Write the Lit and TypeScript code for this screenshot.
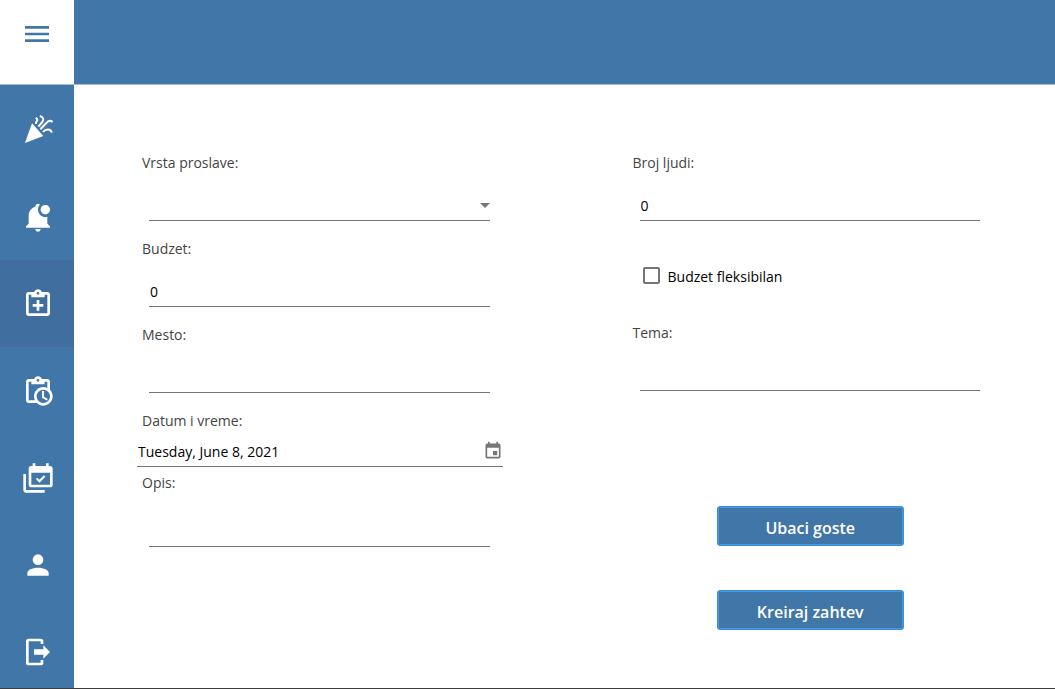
import { LitElement, html, css, svg } from "lit";
import { customElement, state } from "lit/decorators.js";
import { classMap } from "lit/directives/class-map.js";

const partyIcon = svg`
  <path d="M7.5 6.9L2.2 21.7L16 16.5z"/>
  <g fill="none" stroke="currentColor" stroke-width="1.5">
    <path d="M10.3 2.9C11.6 3.7 11.8 4.5 11.1 5.4C10.5 6.1 10.3 6.7 10.6 7.5"/>
    <path d="M13.4 1.5C16 2.2 16.7 4.2 15.2 6L12.3 9.4"/>
    <path d="M13.8 11.4L18.6 6.4C19.8 5 21.5 4.8 23 6"/>
    <path d="M15.7 13.5C17.6 11.1 21.6 10.6 22.3 14"/>
  </g>`;

const paths = {
  menu: "M3 6H21V8H3V6M3 11H21V13H3V11M3 16H21V18H3V16Z",
  bell: "M21 6.5C21 8.43 19.43 10 17.5 10S14 8.43 14 6.5 15.57 3 17.5 3 21 4.57 21 6.5M19 11.79C18.5 11.92 18 12 17.5 12C14.47 12 12 9.53 12 6.5C12 5.03 12.58 3.7 13.5 2.71C13.15 2.28 12.61 2 12 2C10.9 2 10 2.9 10 4V4.29C7.03 5.17 5 7.9 5 11V17L3 19V20H21V19L19 17V11.79M12 23C13.11 23 14 22.11 14 21H10C10 22.11 10.9 23 12 23Z",
  add: "M19 3H14.82C14.4 1.84 13.3 1 12 1S9.6 1.84 9.18 3H5C3.9 3 3 3.9 3 5V19C3 20.1 3.9 21 5 21H19C20.1 21 21 20.1 21 19V5C21 3.9 20.1 3 19 3M12 3C12.55 3 13 3.45 13 4S12.55 5 12 5 11 4.55 11 4 11.45 3 12 3M7 7H17V5H19V19H5V5H7V7M13 9H11V12H8V14H11V17H13V14H16V12H13V9Z",
  clock: "M21 11.11V5C21 3.9 20.11 3 19 3H14.82C14.4 1.84 13.3 1 12 1S9.6 1.84 9.18 3H5C3.9 3 3 3.9 3 5V19C3 20.11 3.9 21 5 21H11.11C12.37 22.24 14.09 23 16 23C19.87 23 23 19.87 23 16C23 14.09 22.24 12.37 21 11.11M12 3C12.55 3 13 3.45 13 4S12.55 5 12 5 11 4.55 11 4 11.45 3 12 3M5 19V5H7V7H17V5H19V9.68C18.09 9.25 17.08 9 16 9C12.13 9 9 12.13 9 16C9 17.08 9.25 18.09 9.68 19H5M16 21C13.24 21 11 18.76 11 16S13.24 11 16 11 21 13.24 21 16 18.76 21 16 21M16.5 16.25L19.36 17.94L18.61 19.16L15 17V12H16.5V16.25Z",
  calendars: "M21 17V8H7V17H21M21 3A2 2 0 0 1 23 5V17A2 2 0 0 1 21 19H7C5.89 19 5 18.1 5 17V5A2 2 0 0 1 7 3H8V1H10V3H18V1H20V3H21M17.53 11.06L13.09 15.5L10.41 12.82L11.47 11.76L13.09 13.38L16.47 10L17.53 11.06M3 21H17V23H3C1.89 23 1 22.1 1 21V9H3V21Z",
  account: "M12 4A4 4 0 0 1 16 8A4 4 0 0 1 12 12A4 4 0 0 1 8 8A4 4 0 0 1 12 4M12 14C16.42 14 20 15.79 20 18V20H4V18C4 15.79 7.58 14 12 14Z",
  logout: "M16 17V14H9V10H16V7L21 12L16 17M14 2A2 2 0 0 1 16 4V6H14V4H5V20H14V18H16V20A2 2 0 0 1 14 22H5A2 2 0 0 1 3 20V4A2 2 0 0 1 5 2H14Z",
  calendar: "M19 19H5V8H19M16 1V3H8V1H6V3H5C3.89 3 3 3.89 3 5V19A2 2 0 0 0 5 21H19A2 2 0 0 0 21 19V5C21 3.89 20.1 3 19 3H18V1M17 12H12V17H17V12Z",
};

const shape = (d: string) => svg`<path d=${d}/>`;

const navItems = [
  { id: "proslave", label: "Proslave", art: partyIcon },
  { id: "obavestenja", label: "Obaveštenja", art: shape(paths.bell) },
  { id: "novi", label: "Novi zahtev", art: shape(paths.add) },
  { id: "zahtevi", label: "Zahtevi", art: shape(paths.clock) },
  { id: "kalendar", label: "Kalendar", art: shape(paths.calendars) },
  { id: "profil", label: "Profil", art: shape(paths.account) },
  { id: "odjava", label: "Odjava", art: shape(paths.logout) },
];

const icon = (art: unknown) =>
  html`<svg class="icon" viewBox="0 0 24 24" fill="currentColor" aria-hidden="true">${art}</svg>`;

@customElement("side-nav")
export class SideNav extends LitElement {
  @state() active = "novi";

  static styles = css`
    :host {
      display: flex;
      flex-direction: column;
      background: #4176a8;
    }
    .toggle {
      flex: none;
      display: flex;
      align-items: flex-start;
      height: 84px;
      padding: 18px 0 0 21px;
      border: 0;
      background: #fff;
      color: #4176a8;
    }
    .items {
      flex: 1;
      display: flex;
      flex-direction: column;
      border-top: 1px solid #a5c0d8;
      padding-top: 1px;
    }
    .item {
      flex: none;
      box-sizing: border-box;
      height: 87px;
      padding: 28px 0 0 22px;
      color: #fff;
      line-height: 0;
    }
    .item:last-child {
      flex: 1;
      height: auto;
    }
    .active {
      background: #406f9f;
    }
    .icon {
      width: 32px;
      height: 32px;
    }
  `;

  render() {
    return html`
      <button class="toggle" aria-label="Meni">${icon(shape(paths.menu))}</button>
      <nav class="items">
        ${navItems.map(
          (n) => html`<a
            class=${classMap({ item: true, active: n.id === this.active })}
            href="#${n.id}"
            aria-label=${n.label}
            @click=${() => (this.active = n.id)}
            >${icon(n.art)}</a
          >`
        )}
      </nav>
    `;
  }
}

@customElement("request-form")
export class RequestForm extends LitElement {
  static styles = css`
    :host {
      display: block;
      font: 14px/20px "Segoe UI", "Open Sans", "Noto Sans", sans-serif;
    }
    .form {
      display: grid;
      grid-template-columns: 1fr 1fr;
      padding: 68px 0 58px;
    }
    .column {
      display: flex;
      flex-direction: column;
      padding: 0 62px 0 63px;
    }
    .field {
      display: flex;
      flex-direction: column;
      gap: 12px;
      margin-bottom: 18px;
    }
    .label {
      padding-left: 5px;
      color: #444;
    }
    .control {
      box-sizing: border-box;
      height: 36px;
      margin: 0 13px 0 12px;
      padding: 6px 1px 0;
      border: 0;
      border-bottom: 1px solid #757575;
      border-radius: 0;
      background: transparent;
      color: #000;
      font: inherit;
      outline: none;
      appearance: none;
      min-width: 0;
    }
    .pick {
      display: grid;
      align-items: center;
      color: #757575;
    }
    .pick .control,
    .caret {
      grid-area: 1 / 1;
    }
    .caret {
      justify-self: end;
      width: 10px;
      height: 5px;
      margin-right: 13px;
      margin-top: 4px;
      pointer-events: none;
    }
    .field.compact {
      gap: 4px;
      margin-bottom: 6px;
    }
    .date {
      display: flex;
      align-items: center;
      height: 31px;
      border-bottom: 1px solid #757575;
    }
    .date .control {
      flex: 1;
      height: 31px;
      margin: 0;
      padding: 2px 1px 0;
      border: 0;
    }
    .calendar {
      padding: 0;
      border: 0;
      background: none;
      color: #757575;
      line-height: 0;
    }
    .icon {
      width: 20px;
      height: 20px;
    }
    .note {
      height: 54px;
      resize: none;
    }
    .field.tall {
      gap: 0;
      margin-bottom: 0;
    }
    .check {
      display: flex;
      align-items: center;
      gap: 8px;
      height: 24px;
      margin: 26px 15px 34px;
      color: #000;
    }
    .box {
      box-sizing: border-box;
      width: 17px;
      height: 17px;
      margin: 0 0 3px;
      border: 2px solid #757575;
      border-radius: 2px;
      appearance: none;
    }
    .box:checked {
      background: #4176a8;
    }
    .actions {
      display: flex;
      flex-direction: column;
      align-items: center;
      gap: 44px;
      padding-top: 97px;
    }
    .button {
      width: 187px;
      height: 40px;
      padding: 3px 0 0;
      border: 1px solid #2196f3;
      border-radius: 3px;
      box-shadow: inset 0 0 0 1px #5c93c6;
      background: #4176a8;
      color: #fff;
      font: 600 16px/24px "Segoe UI", "Open Sans", "Noto Sans", sans-serif;
    }
  `;

  private submit(e: Event) {
    e.preventDefault();
  }

  render() {
    return html`
      <form class="form" @submit=${this.submit}>
        <div class="column">
          <div class="field">
            <label class="label" for="vrsta">Vrsta proslave:</label>
            <div class="pick">
              <select class="control" id="vrsta">
                <option></option>
              </select>
              <svg class="caret" viewBox="0 0 10 5" fill="currentColor" aria-hidden="true">
                <path d="M0 0H10L5 5z" />
              </svg>
            </div>
          </div>
          <div class="field">
            <label class="label" for="budzet">Budzet:</label>
            <input class="control" id="budzet" inputmode="numeric" value="0" />
          </div>
          <div class="field">
            <label class="label" for="mesto">Mesto:</label>
            <input class="control" id="mesto" />
          </div>
          <div class="field compact">
            <label class="label" for="datum">Datum i vreme:</label>
            <div class="date">
              <input class="control" id="datum" value="Tuesday, June 8, 2021" />
              <button class="calendar" type="button" aria-label="Izaberi datum">
                ${icon(shape(paths.calendar))}
              </button>
            </div>
          </div>
          <div class="field tall">
            <label class="label" for="opis">Opis:</label>
            <textarea class="control note" id="opis"></textarea>
          </div>
        </div>
        <div class="column">
          <div class="field">
            <label class="label" for="broj">Broj ljudi:</label>
            <input class="control" id="broj" inputmode="numeric" value="0" />
          </div>
          <label class="check"><input class="box" type="checkbox" />Budzet fleksibilan</label>
          <div class="field">
            <label class="label" for="tema">Tema:</label>
            <input class="control" id="tema" />
          </div>
          <div class="actions">
            <button class="button" type="button">Ubaci goste</button>
            <button class="button" type="submit">Kreiraj zahtev</button>
          </div>
        </div>
      </form>
    `;
  }
}

@customElement("app-root")
export class AppRoot extends LitElement {
  static styles = css`
    :host {
      box-sizing: border-box;
      display: grid;
      grid-template-columns: 74px 1fr;
      min-height: 100vh;
      border-bottom: 1px solid #3c3c3c;
      background: #fff;
    }
    .banner {
      height: 84px;
      border-bottom: 1px solid #a5c0d8;
      background: #4176a8;
    }
  `;

  render() {
    return html`
      <side-nav></side-nav>
      <main>
        <header class="banner"></header>
        <request-form></request-form>
      </main>
    `;
  }
}
